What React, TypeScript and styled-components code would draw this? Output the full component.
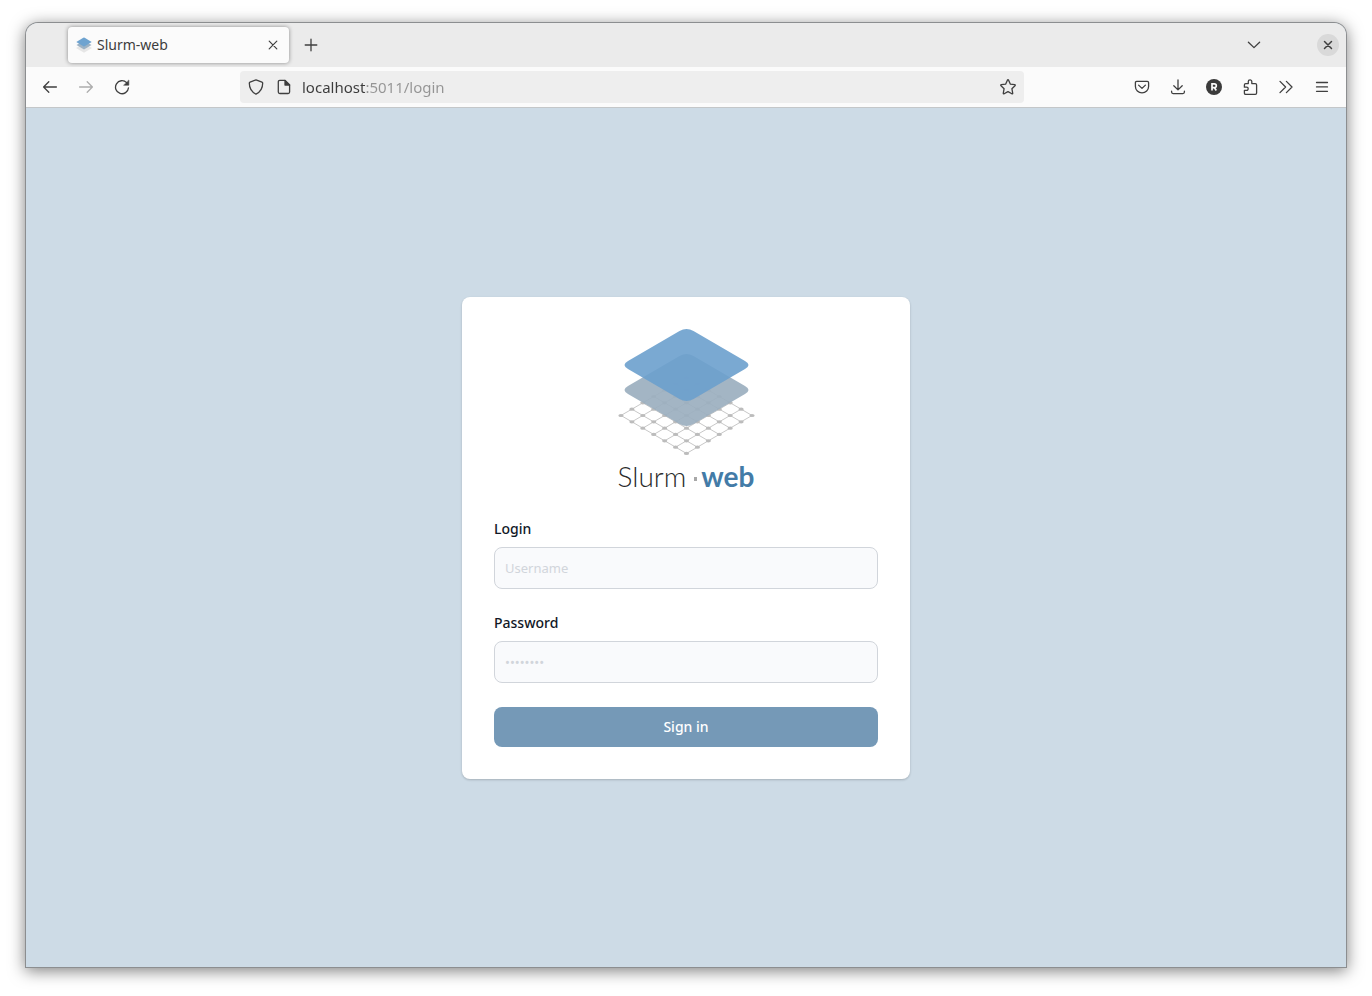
import React from "react";
import styled, { createGlobalStyle, css } from "styled-components";

const GlobalStyle = createGlobalStyle`
  *, *::before, *::after { box-sizing: border-box; }
  body {
    margin: 0;
    background: #ffffff;
    font-family: "Noto Sans", "Open Sans", sans-serif;
    font-size: 14px;
    line-height: 20px;
    color: #3d3d3d;
  }
  button, input { font: inherit; color: inherit; margin: 0; }
`;

const Desktop = styled.div`
  display: flex;
  min-height: 100vh;
  padding: 23px 26px 29px;
`;

const BrowserWindow = styled.div`
  display: flex;
  flex: 1;
  flex-direction: column;
  min-width: 0;
  border-radius: 12px 12px 0 0;
  background: #cddbe6;
  box-shadow: 0 0 0 1px #8c8e90, 0 3px 16px 1px rgba(0, 0, 0, 0.5);
`;

const TabBar = styled.header`
  display: flex;
  align-items: center;
  height: 44px;
  padding: 0 7px 0 42px;
  border-radius: 12px 12px 0 0;
  background: #ebebeb;
`;

const Tab = styled.div`
  display: flex;
  align-items: center;
  gap: 5px;
  width: 221px;
  height: 36px;
  padding: 0 4px 0 8px;
  border-radius: 4px;
  background: #fbfbfb;
  box-shadow: 0 0 4px rgba(0, 0, 0, 0.42);
`;

const TabTitle = styled.span`
  flex: 1;
`;

const IconButton = styled.button<{ $width?: number; $faded?: boolean; $round?: boolean }>`
  display: flex;
  flex: none;
  align-items: center;
  justify-content: center;
  width: ${(p) => p.$width ?? 36}px;
  height: ${(p) => p.$width ?? 32}px;
  padding: 0;
  border: 0;
  border-radius: 4px;
  background: transparent;
  color: #3f3f3f;
  cursor: pointer;
  ${(p) => p.$faded && css`color: #adadad;`}
  ${(p) => p.$round && css`
    border-radius: 50%;
    background: #d9d9d9;
  `}
`;

const WindowControls = styled.div`
  display: flex;
  align-items: center;
  gap: 45px;
  margin-left: auto;
`;

const Toolbar = styled.nav`
  display: flex;
  align-items: center;
  height: 41px;
  padding: 0 6px;
  border-bottom: 1px solid #c4c7c9;
  background: #fbfbfb;
`;

const ButtonGroup = styled.div`
  display: flex;
`;

const AddressBar = styled.div`
  display: flex;
  flex: 1;
  align-items: center;
  min-width: 0;
  height: 32px;
  margin: 0 100px;
  padding-left: 2px;
  border-radius: 4px;
  background: #eeeeee;
`;

const AddressInput = styled.input`
  flex: 1;
  min-width: 0;
  height: 24px;
  margin-left: 4px;
  padding: 0;
  border: 0;
  outline: 0;
  font-size: 15px;
  color: #8f8f8f;
  background: linear-gradient(90deg, #3b3b3b 64px, #949494 64px);
  -webkit-background-clip: text;
  background-clip: text;
  -webkit-text-fill-color: transparent;
`;

const Page = styled.main`
  display: flex;
  flex: 1;
  align-items: center;
  justify-content: center;
  padding: 24px;
`;

const Card = styled.section`
  display: flex;
  flex-direction: column;
  gap: 24px;
  width: 100%;
  max-width: 448px;
  padding: 32px;
  border-radius: 8px;
  background: #ffffff;
  box-shadow: 0 1px 3px rgba(0, 0, 0, 0.1), 0 1px 2px rgba(0, 0, 0, 0.1);
`;

const Brand = styled.div`
  display: flex;
  flex-direction: column;
  align-items: center;
`;

const Wordmark = styled.h1`
  display: flex;
  align-items: center;
  margin: 0;
  font-family: Lato, sans-serif;
  font-size: 28px;
  font-weight: 300;
  line-height: 38px;
  color: #2b2b2b;
`;

const WordmarkDot = styled.span`
  width: 3px;
  height: 4px;
  margin: 6px 4px 0 8px;
  background: #a8a8a8;
`;

const WordmarkAccent = styled.span`
  font-weight: 700;
  color: #437ba7;
`;

const LoginForm = styled.form`
  display: flex;
  flex-direction: column;
  gap: 24px;
`;

const Field = styled.div`
  display: flex;
  flex-direction: column;
  gap: 8px;
`;

const Label = styled.label`
  font-weight: 500;
  color: #111827;
`;

const TextInput = styled.input`
  width: 100%;
  height: 42px;
  padding: 0 10px;
  border: 1px solid #d1d5db;
  border-radius: 8px;
  background: #f9fafc;
  color: #111827;
  font-size: 13px;
  &::placeholder { color: #d1d5db; opacity: 1; }
`;

const SubmitButton = styled.button`
  height: 40px;
  border: 0;
  border-radius: 8px;
  background: #7599b7;
  color: #ffffff;
  font-weight: 500;
  cursor: pointer;
`;

const Icon = ({ children, size = 16, weight = 1.3 }: { children: React.ReactNode; size?: number; weight?: number }) => (
  <svg
    width={size}
    height={size}
    viewBox="0 0 16 16"
    fill="none"
    stroke="currentColor"
    strokeWidth={weight}
    strokeLinecap="round"
    strokeLinejoin="round"
    aria-hidden="true"
  >
    {children}
  </svg>
);

const Favicon = () => (
  <svg width="16" height="16" viewBox="0 0 16 16" aria-hidden="true">
    <path d="M0 11 8 6.5 16 11 8 15.8Z" fill="#e6e6e6" />
    <path d="M.5 8 8 3.8 15.5 8 8 12.5Z" fill="#9db2c4" />
    <path d="M.3 5 7.3.7Q8 .3 8.7.7L15.7 5 8.7 9.2Q8 9.6 7.3 9.2Z" fill="#6ea3d0" />
  </svg>
);

const STEPS = [0, 1, 2, 3, 4, 5, 6];
const gridPoint = (a: number, b: number): [number, number] => [
  69.5 + (a - b) * 10.92,
  48.5 + (a + b) * 6.33,
];
const layer = (y: number) =>
  `M62.5 ${y - 34}Q69.5 ${y - 38} 76.5 ${y - 34}L128 ${y - 4}Q135 ${y} 128 ${y + 4}` +
  `L76.5 ${y + 34}Q69.5 ${y + 38} 62.5 ${y + 34}L11 ${y + 4}Q4 ${y} 11 ${y - 4}Z`;

const LayersLogo = () => (
  <svg width="138" height="128" viewBox="0 0 138 128" aria-hidden="true">
    <g stroke="#c8c8c8" strokeWidth="1">
      {STEPS.map((s) => {
        const [x1, y1] = gridPoint(s, 0);
        const [x2, y2] = gridPoint(s, 6);
        const [x3, y3] = gridPoint(0, s);
        const [x4, y4] = gridPoint(6, s);
        return (
          <g key={s}>
            <line x1={x1} y1={y1} x2={x2} y2={y2} />
            <line x1={x3} y1={y3} x2={x4} y2={y4} />
          </g>
        );
      })}
    </g>
    <g fill="#bcbcbc">
      {STEPS.map((a) =>
        STEPS.map((b) => {
          const [cx, cy] = gridPoint(a, b);
          return <ellipse key={`${a}-${b}`} cx={cx} cy={cy} rx="2.6" ry="1.6" />;
        })
      )}
    </g>
    <path d={layer(61)} fill="#9cafbf" fillOpacity="0.93" />
    <path d={layer(36)} fill="#6ba0cd" fillOpacity="0.9" />
  </svg>
);

export default function App() {
  return (
    <>
      <GlobalStyle />
      <Desktop>
        <BrowserWindow>
          <TabBar>
            <Tab>
              <Favicon />
              <TabTitle>Slurm-web</TabTitle>
              <IconButton $width={24} aria-label="Close tab">
                <Icon weight={1.2}><path d="m4.2 4.2 7.6 7.6m0-7.6-7.6 7.6" /></Icon>
              </IconButton>
            </Tab>
            <IconButton $width={44} aria-label="New tab">
              <Icon><path d="M8 2.2v11.6M2.2 8h11.6" /></Icon>
            </IconButton>
            <WindowControls>
              <IconButton $width={36} aria-label="List all tabs">
                <Icon><path d="m2.4 5.2 5.6 5.4 5.6-5.4" /></Icon>
              </IconButton>
              <IconButton $width={22} $round aria-label="Close window">
                <Icon weight={1.5}><path d="m4.5 4.5 7 7m0-7-7 7" /></Icon>
              </IconButton>
            </WindowControls>
          </TabBar>
          <Toolbar aria-label="Navigation">
            <ButtonGroup>
              <IconButton aria-label="Back">
                <Icon><path d="M14.4 8H1.6m5.2-5.2L1.6 8l5.2 5.2" /></Icon>
              </IconButton>
              <IconButton $faded aria-label="Forward">
                <Icon><path d="M1.6 8h12.8M9.2 2.8 14.4 8l-5.2 5.2" /></Icon>
              </IconButton>
              <IconButton aria-label="Reload">
                <Icon>
                  <path d="M14.5 8.8A6.5 6.5 0 1 1 12.6 3.6" />
                  <path d="M14.8 1.4v4.8H10Z" fill="currentColor" strokeWidth="0.6" />
                </Icon>
              </IconButton>
            </ButtonGroup>
            <AddressBar>
              <IconButton $width={28} aria-label="Tracking protection">
                <Icon>
                  <path d="M8 .9 14 3.1Q14.7 3.4 14.7 4.1C14.7 9 12.5 13 8 15.2 3.5 13 1.3 9 1.3 4.1Q1.3 3.4 2 3.1Z" />
                </Icon>
              </IconButton>
              <IconButton $width={28} aria-label="Site information">
                <Icon>
                  <path d="M9 1.4H3.8Q2.3 1.4 2.3 2.9V13Q2.3 14.5 3.8 14.5H12.1Q13.6 14.5 13.6 13V6Z" />
                  <path d="M9 1.4V6H13.6Z" fill="currentColor" />
                </Icon>
              </IconButton>
              <AddressInput aria-label="Address" defaultValue="localhost:5011/login" />
              <IconButton $width={32} aria-label="Bookmark this page">
                <Icon>
                  <path d="M7.4 1.2Q8 .2 8.6 1.2L10.4 5.2 14.7 5.7Q15.6 5.9 15 6.7L11.9 9.7 12.7 14.2Q12.8 15.2 11.9 14.8L8 12.6 4.1 14.8Q3.2 15.2 3.3 14.2L4.1 9.7 1 6.7Q.4 5.9 1.3 5.7L5.6 5.2Z" />
                </Icon>
              </IconButton>
            </AddressBar>
            <ButtonGroup>
              <IconButton aria-label="Save to Pocket">
                <Icon>
                  <path d="M2.7 2.4H13.3Q14.6 2.4 14.6 3.7V7.4A6.6 6.4 0 0 1 1.4 7.4V3.7Q1.4 2.4 2.7 2.4Z" />
                  <path d="M4.6 6.1 8 9.4 11.4 6.1" />
                </Icon>
              </IconButton>
              <IconButton aria-label="Downloads">
                <Icon>
                  <path d="M8 .9v9.8M3.8 6.8 8 10.9 12.2 6.8M1.6 12.2v.9Q1.6 14.6 3.1 14.6h9.8Q14.4 14.6 14.4 13.1v-.9" />
                </Icon>
              </IconButton>
              <IconButton aria-label="Extension">
                <svg width="16" height="16" viewBox="0 0 16 16" aria-hidden="true">
                  <circle cx="8" cy="8" r="8" fill="#3b3b3b" />
                  <path
                    d="M6 11.5V4.9H8.3Q10.3 4.9 10.3 6.8T8.3 8.6H6M8.3 8.6 10.3 11.5"
                    fill="none"
                    stroke="#fbfbfb"
                    strokeWidth="1.7"
                  />
                </svg>
              </IconButton>
              <IconButton aria-label="Extensions">
                <Icon>
                  <path d="M6.3 4.6V2.6A1.75 1.75 0 0 1 9.8 2.6V4.6H13.3Q14.6 4.6 14.6 5.9V14Q14.6 15.3 13.3 15.3H3.7Q2.4 15.3 2.4 14V11.4H4.6A1.6 1.6 0 0 0 4.6 8.2H2.4V5.9Q2.4 4.6 3.7 4.6Z" />
                </Icon>
              </IconButton>
              <IconButton aria-label="More tools">
                <Icon><path d="m2 2.4 5.6 5.6L2 13.6M8.4 2.4 14 8l-5.6 5.6" /></Icon>
              </IconButton>
              <IconButton aria-label="Open application menu">
                <Icon><path d="M2.5 3.5h11M2.5 7.9h11M2.5 12.3h11" /></Icon>
              </IconButton>
            </ButtonGroup>
          </Toolbar>
          <Page>
            <Card>
              <Brand>
                <LayersLogo />
                <Wordmark>
                  <span>Slurm</span>
                  <WordmarkDot />
                  <WordmarkAccent>web</WordmarkAccent>
                </Wordmark>
              </Brand>
              <LoginForm onSubmit={(e) => e.preventDefault()}>
                <Field>
                  <Label htmlFor="login">Login</Label>
                  <TextInput id="login" type="text" placeholder="Username" />
                </Field>
                <Field>
                  <Label htmlFor="password">Password</Label>
                  <TextInput id="password" type="password" placeholder="••••••••" />
                </Field>
                <SubmitButton type="submit">Sign in</SubmitButton>
              </LoginForm>
            </Card>
          </Page>
        </BrowserWindow>
      </Desktop>
    </>
  );
}
